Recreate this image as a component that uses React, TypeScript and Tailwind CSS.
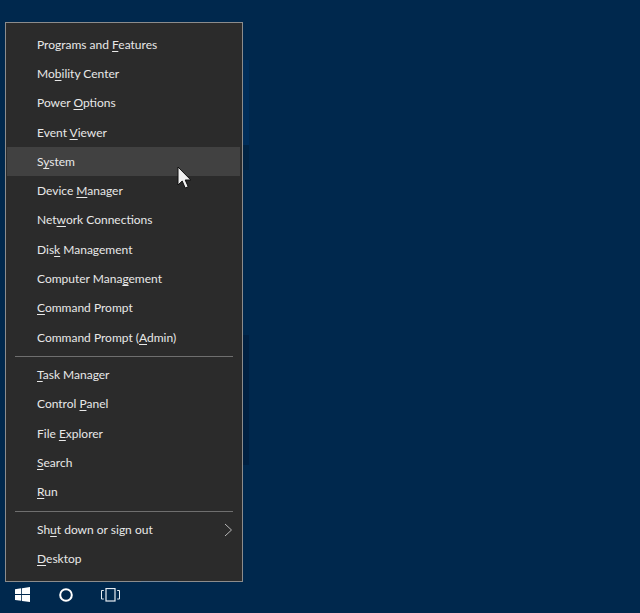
import { ReactNode } from "react";

type Item = { before: string; key_: string; after: string; hover?: boolean; arrow?: boolean };

const groups: Item[][] = [
  [
    { before: "Programs and ", key_: "F", after: "eatures" },
    { before: "Mo", key_: "b", after: "ility Center" },
    { before: "Power ", key_: "O", after: "ptions" },
    { before: "Event ", key_: "V", after: "iewer" },
    { before: "S", key_: "y", after: "stem", hover: true },
    { before: "Device ", key_: "M", after: "anager" },
    { before: "Net", key_: "w", after: "ork Connections" },
    { before: "Dis", key_: "k", after: " Management" },
    { before: "Computer Mana", key_: "g", after: "ement" },
    { before: "", key_: "C", after: "ommand Prompt" },
    { before: "Command Prompt (", key_: "A", after: "dmin)" },
  ],
  [
    { before: "", key_: "T", after: "ask Manager" },
    { before: "Control ", key_: "P", after: "anel" },
    { before: "File ", key_: "E", after: "xplorer" },
    { before: "", key_: "S", after: "earch" },
    { before: "", key_: "R", after: "un" },
  ],
  [
    { before: "Sh", key_: "u", after: "t down or sign out", arrow: true },
    { before: "", key_: "D", after: "esktop" },
  ],
];

function MenuRow({ item }: { item: Item }) {
  return (
    <div
      className={`flex h-[29.3px] items-center justify-between pl-[30px] pr-[7px] ${
        item.hover ? "bg-[#414141]" : ""
      }`}
    >
      <span className="text-[12px] leading-none text-[#e8e8e8]">
        {item.before}
        <u className="underline-offset-2">{item.key_}</u>
        {item.after}
      </span>
      {item.arrow && (
        <svg width="9" height="14" viewBox="0 0 9 14" fill="none" stroke="#b8b8b8" strokeWidth="1">
          <path d="M1 1l6.5 6L1 13" />
        </svg>
      )}
    </div>
  );
}

function Separator() {
  return <div className="ml-[7.5px] mr-[7px] my-[3.6px] h-px bg-[#6f6f6f]" />;
}

function TaskbarIcon({ className, children }: { className: string; children: ReactNode }) {
  return <div className={className}>{children}</div>;
}

export default function App() {
  return (
    <div
      className="relative flex h-[613px] w-[640px] flex-col overflow-hidden bg-[#00284d] pl-[5px] pt-[22px]"
      style={{ fontFamily: 'Lato, Roboto, sans-serif' }}
    >
      <div className="absolute left-[243px] top-[60px] h-[85px] w-[6px] bg-[#002d59]" />
      <div className="absolute left-[243px] top-[145px] h-[25px] w-[6px] bg-[#002343]" />
      <div className="absolute left-[243px] top-[335px] h-[130px] w-[6px] bg-[#002041]" />

      <div className="relative flex h-[560px] w-[238px] flex-col border border-[#8c8c8c] bg-[#2b2b2b] pl-[1px] pr-[2px] pt-[7px]">
        {groups.map((group, i) => (
          <div key={i}>
            {i > 0 && <Separator />}
            {group.map((item) => (
              <MenuRow key={item.before + item.key_} item={item} />
            ))}
          </div>
        ))}
      </div>

      <div className="relative -ml-[5px] flex h-[31px] items-center pb-[6px]">
        <div className="absolute left-[141px] top-[-1px] h-px w-[37px] bg-[#7a8a9a]" />
        <TaskbarIcon className="ml-[15px] w-[15px]">
          <svg width="15" height="15" viewBox="0 0 15 15" fill="#fff">
            <path d="M0 2.2l6.2-.9v5.8H0zM7 1.2l8-1.2v7.1H7zM0 8h6.2v5.8L0 12.9zM7 8h8v7l-8-1.1z" />
          </svg>
        </TaskbarIcon>
        <TaskbarIcon className="ml-[29px] w-[14px]">
          <svg width="14" height="14" viewBox="0 0 14 14" fill="none" stroke="#fff" strokeWidth="2">
            <circle cx="7" cy="7" r="5.8" />
          </svg>
        </TaskbarIcon>
        <TaskbarIcon className="ml-[28px] w-[19px]">
          <svg width="19" height="14" viewBox="0 0 19 14" fill="none" stroke="#e6ecf2" strokeWidth="1">
            <rect x="5" y="0.5" width="9" height="12.5" strokeWidth="1.2" />
            <path d="M2.8 2.5H.5v8.5h2.3M16.2 2.5h2.3v8.5h-2.3" />
          </svg>
        </TaskbarIcon>
      </div>

      <svg className="absolute left-[177px] top-[166px]" width="15" height="24" viewBox="0 0 15 24">
        <path d="M1 1v18l4.2-4 3 7 3-1.3-3-6.7h5.6z" fill="#f2f2f2" stroke="#111" strokeWidth="1" />
      </svg>
    </div>
  );
}
